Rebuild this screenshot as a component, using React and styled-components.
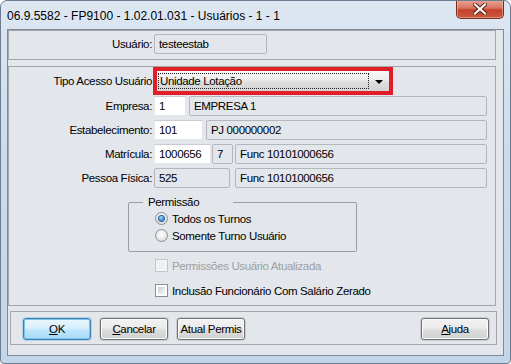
import styled, { createGlobalStyle } from 'styled-components';

const GlobalStyle = createGlobalStyle`
  html, body {
    margin: 0;
    padding: 0;
    background: #ffffff;
  }
  body {
    font-family: "Liberation Sans", Arial, sans-serif;
  }
`;

const Window = styled.div`
  width: 511px;
  height: 364px;
  box-sizing: border-box;
  border: 1px solid #6c7d91;
  border-radius: 7px 7px 4px 4px;
  background: linear-gradient(180deg, #dde7f2 0%, #cddcec 40%, #c3d5e9 100%);
  display: flex;
  flex-direction: column;
  overflow: hidden;
`;

const TitleBar = styled.div`
  height: 28px;
  display: flex;
  justify-content: space-between;
  align-items: flex-start;
  flex-shrink: 0;
`;

const Title = styled.span`
  margin: 7px 0 0 6px;
  font-size: 12px;
  line-height: 16px;
  color: #000;
`;

const CloseButton = styled.div`
  width: 48px;
  height: 19px;
  margin: -1px 6px 0 0;
  box-sizing: border-box;
  border: 1px solid #7a2c1f;
  border-top: none;
  border-radius: 0 0 5px 5px;
  background: linear-gradient(180deg, #e8a898 0%, #d87460 45%, #c4412a 55%, #c85a3e 100%);
  box-shadow: inset 0 0 0 1px rgba(255, 210, 200, 0.45);
  display: flex;
  align-items: center;
  justify-content: center;
`;

const Client = styled.div`
  flex: 1;
  margin: 0 6px 7px 6px;
  border: 1px solid #7d8a99;
  background: #e3e6eb;
  display: flex;
  flex-direction: column;
`;

const Panel = styled.div`
  box-sizing: border-box;
  width: ${(p) => p.$width || 488}px;
  height: ${(p) => p.$height}px;
  margin: ${(p) => p.$margin || '0'};
  border: 1px solid #a2a6ab;
  display: flex;
  flex-direction: ${(p) => p.$row ? 'row' : 'column'};
  padding: ${(p) => p.$padding || '0'};
`;

const Row = styled.div`
  display: flex;
  align-items: center;
  height: ${(p) => p.$height || 20}px;
  margin-top: ${(p) => p.$top || 0}px;
  padding-right: 8px;
`;

const Label = styled.span`
  width: 145px;
  flex-shrink: 0;
  box-sizing: border-box;
  padding-right: 2px;
  text-align: right;
  font-size: 11.5px;
  letter-spacing: -0.35px;
  color: #000;
  white-space: nowrap;
`;

const Field = styled.div`
  box-sizing: border-box;
  height: 20px;
  width: ${(p) => (p.$width ? `${p.$width}px` : 'auto')};
  flex: ${(p) => (p.$width ? '0 0 auto' : '1')};
  margin-left: ${(p) => p.$gap || 0}px;
  padding: 0 4px;
  font-size: 11.5px;
  letter-spacing: -0.35px;
  line-height: 18px;
  color: #000;
  white-space: nowrap;
  overflow: hidden;
  background: ${(p) => (p.$white ? '#ffffff' : 'transparent')};
  border: 1px solid ${(p) => (p.$white ? '#e2e5ea' : '#b3b6ba')};
  border-top-color: ${(p) => (p.$white ? '#c9ccd2' : '#b3b6ba')};
  border-radius: ${(p) => (p.$white ? 0 : 2)}px;
`;

const Highlight = styled.div`
  border: 4px solid #e21d2a;
  margin-left: -1px;
  display: flex;
`;

const Combo = styled.div`
  box-sizing: border-box;
  width: 232px;
  height: 20px;
  display: flex;
  align-items: center;
  background: linear-gradient(180deg, #f7f7f7 0%, #ececec 45%, #dedede 55%, #d3d3d3 100%);
`;

const FocusText = styled.div`
  box-sizing: border-box;
  width: 211px;
  height: 16px;
  margin-left: 1px;
  border: 1px dotted #202020;
  padding-left: 1px;
  font-size: 11.5px;
  letter-spacing: -0.35px;
  line-height: 14px;
  color: #000;
`;

const ArrowZone = styled.div`
  flex: 1;
  display: flex;
  justify-content: center;
  align-items: center;
`;

const Arrow = styled.div`
  width: 0;
  height: 0;
  border-left: 4px solid transparent;
  border-right: 4px solid transparent;
  border-top: 4px solid #000;
  margin-top: 1px;
`;

const Group = styled.fieldset`
  box-sizing: border-box;
  width: 229px;
  height: 57px;
  margin: 7px 0 0 119px;
  padding: 1px 0 0 26px;
  border: 1px solid #9a9ea3;
  border-radius: 2px;
  min-width: 0;
`;

const Legend = styled.legend`
  margin-left: -12px;
  padding: 0 34px 0 5px;
  font-size: 11.5px;
  letter-spacing: -0.35px;
  line-height: 14px;
  color: #000;
`;

const OptionRow = styled.div`
  display: flex;
  align-items: center;
  height: 17px;
  margin: ${(p) => p.$margin || '0'};
  gap: 4px;
  font-size: 11.5px;
  letter-spacing: -0.35px;
  color: ${(p) => (p.$disabled ? '#9d9fa2' : '#000')};
  white-space: nowrap;
`;

const Radio = styled.span`
  width: 13px;
  height: 13px;
  box-sizing: border-box;
  border-radius: 50%;
  border: 1px solid #8b8e92;
  background: radial-gradient(circle at 50% 40%, #ffffff 0%, #e6e6e6 60%, #cfd1d4 100%);
  display: flex;
  align-items: center;
  justify-content: center;
  flex-shrink: 0;

  &::after {
    content: '';
    width: 5px;
    height: 5px;
    border-radius: 50%;
    background: ${(p) => (p.$checked ? 'radial-gradient(circle at 40% 35%, #a9dcfb 0%, #3d8fcf 55%, #1b5a94 100%)' : 'transparent')};
    box-shadow: ${(p) => (p.$checked ? '0 0 0 1px #25619c' : 'none')};
  }
`;

const Check = styled.span`
  width: 13px;
  height: 13px;
  box-sizing: border-box;
  border: 1px solid ${(p) => (p.$disabled ? '#c2c4c7' : '#8b8e92')};
  background: ${(p) => (p.$disabled ? '#f2f3f4' : '#ffffff')};
  padding: 2px;
  flex-shrink: 0;

  &::after {
    content: '';
    display: block;
    width: 100%;
    height: 100%;
    background: ${(p) => (p.$disabled ? '#eeeff1' : 'linear-gradient(135deg, #cbcdd0 0%, #e8e9eb 60%, #f5f5f5 100%)')};
  }
`;

const Button = styled.div`
  box-sizing: border-box;
  width: 68px;
  height: 22px;
  margin-left: ${(p) => (p.$push ? 'auto' : `${p.$gap || 0}px`)};
  border: 1px solid ${(p) => (p.$default ? '#3c7fb1' : '#707070')};
  border-radius: 3px;
  background: ${(p) =>
    p.$default
      ? 'linear-gradient(180deg, #eaf6fd 0%, #d9f0fc 45%, #bee6fd 55%, #a7d9f5 100%)'
      : 'linear-gradient(180deg, #f2f2f2 0%, #ebebeb 45%, #dddddd 55%, #cfcfcf 100%)'};
  box-shadow: ${(p) =>
    p.$default
      ? 'inset 0 0 0 1px #7cc4ec, 0 0 0 1px #b9d3e6'
      : 'inset 0 0 0 1px #fcfcfc, 0 0 0 1px #c9ccd0'};
  display: flex;
  align-items: center;
  justify-content: center;
  font-size: 11.5px;
  letter-spacing: -0.35px;
  color: #000;
`;

const Mnemonic = styled.span`
  text-decoration: underline;
  text-underline-offset: 1px;
`;

const CloseIcon = () => (
  <svg width="14" height="12" viewBox="0 0 14 12">
    <path d="M2 1.5 L12 10.5 M12 1.5 L2 10.5" stroke="#5a1a10" strokeWidth="4" strokeLinecap="square" />
    <path d="M2 1.5 L12 10.5 M12 1.5 L2 10.5" stroke="#ffffff" strokeWidth="2.2" strokeLinecap="square" />
  </svg>
);

const App = () => (
  <>
    <GlobalStyle />
    <Window>
      <TitleBar>
        <Title>06.9.5582 - FP9100 - 1.02.01.031 - Usuários - 1 - 1</Title>
        <CloseButton>
          <CloseIcon />
        </CloseButton>
      </TitleBar>
      <Client>
        <Panel $height={30} $padding="3px 0 0 0">
          <Row>
            <Label>Usuário:</Label>
            <Field $width={113}>testeestab</Field>
          </Row>
        </Panel>

        <Panel $height={240} $margin="6px 0 0 0">
          <Row $height={28}>
            <Label>Tipo Acesso Usuário</Label>
            <Highlight>
              <Combo>
                <FocusText>Unidade Lotação</FocusText>
                <ArrowZone>
                  <Arrow />
                </ArrowZone>
              </Combo>
            </Highlight>
          </Row>
          <Row $top={1}>
            <Label>Empresa:</Label>
            <Field $white $width={32}>1</Field>
            <Field $gap={3}>EMPRESA 1</Field>
          </Row>
          <Row $top={4}>
            <Label>Estabelecimento:</Label>
            <Field $white $width={49}>101</Field>
            <Field $gap={3}>PJ 000000002</Field>
          </Row>
          <Row $top={4}>
            <Label>Matrícula:</Label>
            <Field $white $width={57}>1000656</Field>
            <Field $width={21} $gap={1}>7</Field>
            <Field $gap={2}>Func 10101000656</Field>
          </Row>
          <Row $top={4}>
            <Label>Pessoa Física:</Label>
            <Field $width={76}>525</Field>
            <Field $gap={5}>Func 10101000656</Field>
          </Row>

          <Group>
            <Legend>Permissão</Legend>
            <OptionRow>
              <Radio $checked />
              Todos os Turnos
            </OptionRow>
            <OptionRow>
              <Radio />
              Somente Turno Usuário
            </OptionRow>
          </Group>

          <OptionRow $disabled $margin="5px 0 0 146px">
            <Check $disabled />
            Permissões Usuário Atualizada
          </OptionRow>
          <OptionRow $margin="8px 0 0 146px">
            <Check />
            Inclusão Funcionário Com Salário Zerado
          </OptionRow>
        </Panel>

        <Panel $row $width={487} $height={34} $margin="5px 0 0 2px" $padding="6px 7px 0 12px">
          <Button $default>
            <span><Mnemonic>O</Mnemonic>K</span>
          </Button>
          <Button $gap={9}>
            <span><Mnemonic>C</Mnemonic>ancelar</span>
          </Button>
          <Button $gap={9}>Atual Permis</Button>
          <Button $push>
            <span><Mnemonic>A</Mnemonic>juda</span>
          </Button>
        </Panel>
      </Client>
    </Window>
  </>
);

export default App;
